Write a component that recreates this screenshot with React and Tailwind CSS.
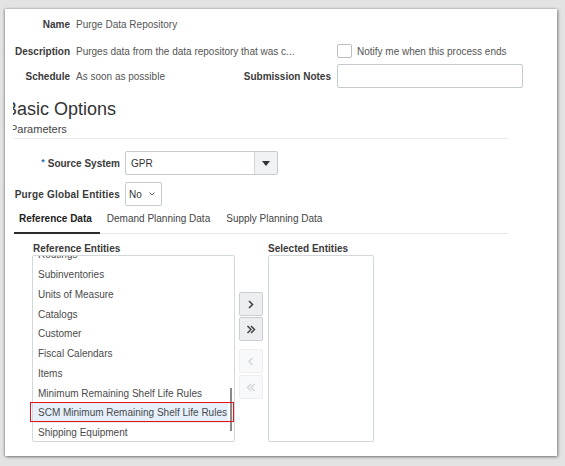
import React from "react";

const items = [
  "Routings",
  "Subinventories",
  "Units of Measure",
  "Catalogs",
  "Customer",
  "Fiscal Calendars",
  "Items",
  "Minimum Remaining Shelf Life Rules",
  "SCM Minimum Remaining Shelf Life Rules",
  "Shipping Equipment",
  "Trading Partners",
];

function ShuttleButton({ children, disabled }) {
  return (
    <div
      className={
        disabled
          ? "w-[24px] h-[24px] flex items-center justify-center rounded-[2px] border border-[#eceef0] bg-[#f8f9fa] text-[#cfd3d7]"
          : "w-[24px] h-[24px] flex items-center justify-center rounded-[2px] border border-[#c9ced3] bg-[#eceef0] text-[#4a4a4a]"
      }
    >
      {children}
    </div>
  );
}

export default function App() {
  return (
    <div className="w-[565px] h-[466px] bg-[#e3e3e3] pt-[9px] pl-[5px] overflow-hidden font-['Liberation_Sans',Arial,sans-serif] text-[10px] text-[#333]">
      <div className="w-[552px] h-[447px] bg-white shadow-[1px_1px_3px_rgba(0,0,0,0.45),-1px_0_2px_rgba(0,0,0,0.25)]">
        <div className="ml-[8px] h-full overflow-hidden">
          {/* top info grid */}
          <div className="mt-[5px] grid grid-cols-[57px_164px_85px_186px] gap-x-[6px]">
            <div className="h-[20px] flex items-center justify-end font-bold text-[#3a3a3a]">Name</div>
            <div className="h-[20px] flex items-center text-[#555] whitespace-nowrap">Purge Data Repository</div>
            <div />
            <div />

            <div className="mt-[7px] h-[20px] flex items-center justify-end font-bold text-[#3a3a3a]">Description</div>
            <div className="mt-[7px] h-[20px] flex items-center text-[#555] whitespace-nowrap">
              Purges data from the data repository that was c...
            </div>
            <div className="mt-[7px]" />
            <div className="mt-[7px] h-[20px] flex items-center gap-[5px] whitespace-nowrap">
              <div className="w-[15px] h-[14px] rounded-[2px] border border-[#b9bfc5] bg-white" />
              <span className="text-[#555]">Notify me when this process ends</span>
            </div>

            <div className="mt-[3px] h-[24px] flex items-center justify-end font-bold text-[#3a3a3a]">Schedule</div>
            <div className="mt-[3px] h-[24px] flex items-center text-[#555] whitespace-nowrap">As soon as possible</div>
            <div className="mt-[3px] h-[24px] flex items-center justify-end font-bold text-[#3a3a3a] whitespace-nowrap">
              Submission Notes
            </div>
            <div className="mt-[3px] h-[24px] rounded-[2px] border border-[#c5cbd1] bg-white" />
          </div>

          {/* heading */}
          <div className="mt-[10px] -ml-[8px] h-[22px] leading-[22px] text-[18px] text-[#333] whitespace-nowrap">
            Basic Options
          </div>
          <div className="mt-[2px] -ml-[3px] h-[14px] leading-[14px] text-[11px] text-[#444]">Parameters</div>
          <div className="mt-[2px] ml-[1px] w-[494px] h-px bg-[#eaecee]" />

          {/* source system */}
          <div className="mt-[12px] flex items-center gap-[5px]">
            <div className="w-[107px] h-[24px] flex items-center justify-end font-bold text-[#3a3a3a] whitespace-nowrap">
              <span className="text-[#2f6fb6] mr-[3px] self-start mt-[5px] text-[9px]">*</span>Source System
            </div>
            <div className="w-[153px] h-[24px] flex rounded-[2px] border border-[#c5cbd1] bg-white overflow-hidden">
              <div className="flex-1 flex items-center pl-[5px] text-[#333]">GPR</div>
              <div className="w-[23px] flex items-center justify-center border-l border-[#d3d7db] bg-[#f1f2f3]">
                <svg width="8" height="5" viewBox="0 0 8 5">
                  <path d="M0 0 H8 L4 5 Z" fill="#333" />
                </svg>
              </div>
            </div>
          </div>

          {/* purge global entities */}
          <div className="mt-[7px] flex items-center gap-[5px]">
            <div className="w-[107px] h-[24px] flex items-center justify-end font-bold text-[#3a3a3a] whitespace-nowrap tracking-[0.2px]">
              Purge Global Entities
            </div>
            <div className="w-[37px] h-[24px] flex items-center justify-between pl-[3px] pr-[6px] rounded-[2px] border border-[#c5cbd1] bg-white">
              <span className="text-[#333]">No</span>
              <svg width="6" height="4" viewBox="0 0 6 4">
                <path d="M0.5 0.5 L3 3 L5.5 0.5" fill="none" stroke="#666" strokeWidth="1" />
              </svg>
            </div>
          </div>

          {/* tabs */}
          <div className="mt-[4px] flex h-[16px] items-center whitespace-nowrap">
            <div className="ml-[6px] font-semibold text-[#222]">Reference Data</div>
            <div className="ml-[15px] text-[#444]">Demand Planning Data</div>
            <div className="ml-[16px] text-[#444]">Supply Planning Data</div>
          </div>
          <div className="mt-[6px] ml-[1px] w-[494px] flex items-end">
            <div className="w-[86px] h-[2px] bg-[#2b2b2b]" />
            <div className="flex-1 h-px bg-[#e6e8ea]" />
          </div>

          {/* shuttle */}
          <div className="ml-[19px] mt-[9px] flex">
            <div className="w-[203px] flex flex-col">
              <div className="relative z-10 h-[12px] leading-[12px] pl-[1px] font-bold text-[#3a3a3a] whitespace-nowrap">
                Reference Entities
              </div>
              <div className="relative">
                <div className="h-[187px] rounded-[2px] border border-[#d3d8dc] bg-white overflow-hidden">
                  <div className="-mt-[11px]">
                    {items.map((it) => (
                      <div
                        key={it}
                        className={
                          it.startsWith("SCM")
                            ? "h-[19.75px] flex items-center pl-[5px] mr-[6px] bg-[#e6f0fb] text-[#4a4a4a] whitespace-nowrap overflow-hidden"
                            : "h-[19.75px] flex items-center pl-[5px] text-[#4a4a4a] whitespace-nowrap overflow-hidden"
                        }
                      >
                        {it}
                      </div>
                    ))}
                  </div>
                </div>
                <div className="absolute left-[198px] top-[133px] w-[2px] h-[43px] bg-[#8a8a8a]" />
                <div className="absolute left-[-2px] top-[147px] w-[204px] h-[20px] border border-[#e3121b]" />
              </div>
            </div>

            <div className="ml-[4px] w-[24px] flex flex-col pt-[49px]">
              <ShuttleButton>
                <svg width="8" height="9" viewBox="0 0 8 9">
                  <path d="M2 1 L5.5 4.5 L2 8" fill="none" stroke="#444" strokeWidth="1.6" />
                </svg>
              </ShuttleButton>
              <div className="mt-[1px]">
                <ShuttleButton>
                  <svg width="10" height="9" viewBox="0 0 10 9">
                    <path d="M1.5 1 L5 4.5 L1.5 8 M5 1 L8.5 4.5 L5 8" fill="none" stroke="#444" strokeWidth="1.5" />
                  </svg>
                </ShuttleButton>
              </div>
              <div className="mt-[8px]">
                <ShuttleButton disabled>
                  <svg width="8" height="9" viewBox="0 0 8 9">
                    <path d="M5.5 1 L2 4.5 L5.5 8" fill="none" stroke="#d2d5d8" strokeWidth="1.3" />
                  </svg>
                </ShuttleButton>
              </div>
              <div className="mt-[2px]">
                <ShuttleButton disabled>
                  <svg width="10" height="9" viewBox="0 0 10 9">
                    <path d="M5 1 L1.5 4.5 L5 8 M8.5 1 L5 4.5 L8.5 8" fill="none" stroke="#d2d5d8" strokeWidth="1.3" />
                  </svg>
                </ShuttleButton>
              </div>
            </div>

            <div className="ml-[5px] w-[106px] flex flex-col">
              <div className="h-[12px] leading-[12px] font-bold text-[#3a3a3a] whitespace-nowrap">Selected Entities</div>
              <div className="h-[187px] rounded-[2px] border border-[#d3d8dc] bg-white" />
            </div>
          </div>
        </div>
      </div>
    </div>
  );
}
